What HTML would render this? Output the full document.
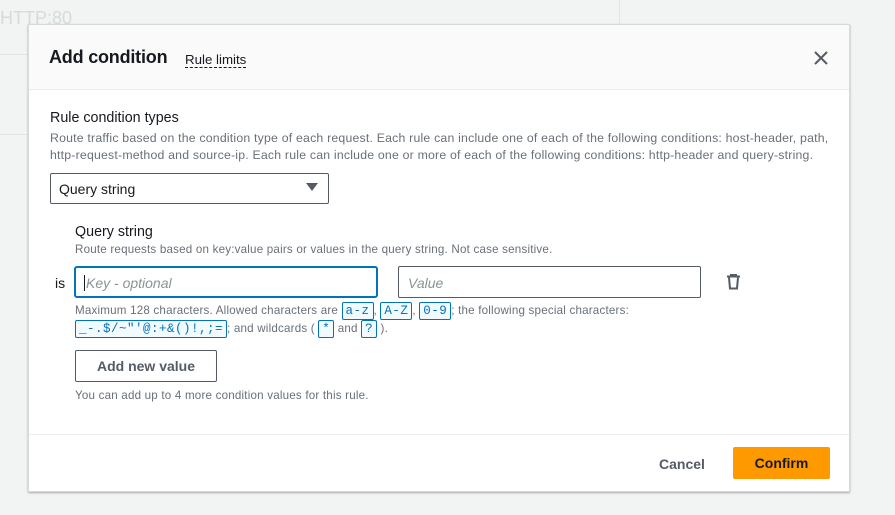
<!DOCTYPE html>
<html><head><meta charset="utf-8">
<style>
*{box-sizing:border-box;margin:0;padding:0}
body{width:895px;height:515px;background:#f2f3f3;font-family:"Liberation Sans",sans-serif;color:#16191f;position:relative;overflow:hidden}
.a{position:absolute;white-space:nowrap}
.modal{position:absolute;left:28px;top:24px;width:822px;height:468px;background:#fff;border:1px solid #d5dbdb;box-shadow:0 1px 2px rgba(0,0,0,.3)}
.hdr{position:absolute;left:0;top:0;width:100%;height:65px;background:#fafafa;border-bottom:1px solid #eaeded}
.small{font-size:12.3px;color:#687078;letter-spacing:.2px}
.code{font-family:"Liberation Mono",monospace;font-size:12.5px;color:#0073bb;border:1px solid #0073bb;border-radius:2px;padding:1px 3px;background:#f1faff;letter-spacing:.5px}
.inp{position:absolute;height:32px;border:1px solid #545b64;border-radius:2px;font-size:14px;font-style:italic;color:#879596;padding:8px 9px}
</style></head><body>
<div class="a" style="left:0;top:8px;font-size:18px;color:#d5dbdb">HTTP:80</div>
<div class="a" style="left:0;top:54px;width:29px;height:1px;background:#e3e6e6"></div>
<div class="a" style="left:0;top:134px;width:29px;height:1px;background:#e3e6e6"></div>
<div class="a" style="left:619px;top:0;width:1px;height:25px;background:#e3e6e6"></div>
<div class="modal">
 <div class="hdr"></div>
 <div class="a" style="left:20px;top:22px;font-size:18px;font-weight:bold;letter-spacing:-.2px">Add condition</div>
 <div class="a" style="left:156px;top:27px;font-size:13.3px;border-bottom:1px dashed #16191f;line-height:15px">Rule limits</div>
 <svg class="a" style="left:785px;top:26px" width="14" height="14" viewBox="0 0 14 14"><path d="M1 1L13 13M13 1L1 13" stroke="#545b64" stroke-width="2"/></svg>
 <div class="a" style="left:21px;top:85px;font-size:14.3px">Rule condition types</div>
 <div class="a small" style="left:21px;top:105px;line-height:17px">Route traffic based on the condition type of each request. Each rule can include one of each of the following conditions: host-header, path,<br>http-request-method and source-ip. Each rule can include one or more of each of the following conditions: http-header and query-string.</div>
 <div class="a" style="left:21px;top:148px;width:279px;height:31px;border:1px solid #545b64;border-radius:2px;font-size:14px;padding:7px 8px">Query string</div>
 <svg class="a" style="left:277px;top:158px" width="12" height="9"><path d="M0 0H12L6 8Z" fill="#545b64"/></svg>
 <div class="a" style="left:46px;top:199px;font-size:14.3px">Query string</div>
 <div class="a small" style="left:46px;top:218px;font-size:11.6px">Route requests based on key:value pairs or values in the query string. Not case sensitive.</div>
 <div class="a" style="left:26px;top:250px;font-size:14px">is</div>
 <div class="inp" style="left:45px;top:241px;width:304px;border:2px solid #0073bb;padding:7px 8px;border-radius:3px"><span style="border-left:1px solid #16191f;padding-left:1px">Key - optional</span></div>
 <div class="inp" style="left:369px;top:241px;width:303px">Value</div>
 <svg class="a" style="left:697px;top:249px" width="15" height="16" viewBox="0 0 15 16"><path d="M1 2.5H14M5 2.5V1H10V2.5M3 3.5L4 14.5H11L12 3.5" fill="none" stroke="#545b64" stroke-width="2"/></svg>
 <div class="a small" style="left:46px;top:277px;line-height:17px;font-size:11.6px">Maximum 128 characters. Allowed characters are <span class="code">a-z</span>, <span class="code">A-Z</span>, <span class="code">0-9</span>; the following special characters:<br><span class="code">_-.$/~"'@:+&amp;()!,;=</span>; and wildcards ( <span class="code">*</span> and <span class="code">?</span> ).</div>
 <div class="a" style="left:46px;top:325px;width:142px;height:32px;border:1px solid #545b64;border-radius:2px;font-size:14px;font-weight:bold;color:#545b64;text-align:center;line-height:30px">Add new value</div>
 <div class="a small" style="left:46px;top:364px;font-size:11.6px">You can add up to 4 more condition values for this rule.</div>
 <div class="a" style="left:0;top:409px;width:100%;height:1px;background:#eaeded"></div>
 <div class="a" style="left:630px;top:431px;font-size:14px;font-weight:bold;color:#545b64">Cancel</div>
 <div class="a" style="left:704px;top:422px;width:97px;height:32px;background:#ff9900;border-radius:2px;font-size:14px;font-weight:bold;text-align:center;line-height:32px">Confirm</div>
</div>
</body></html>
